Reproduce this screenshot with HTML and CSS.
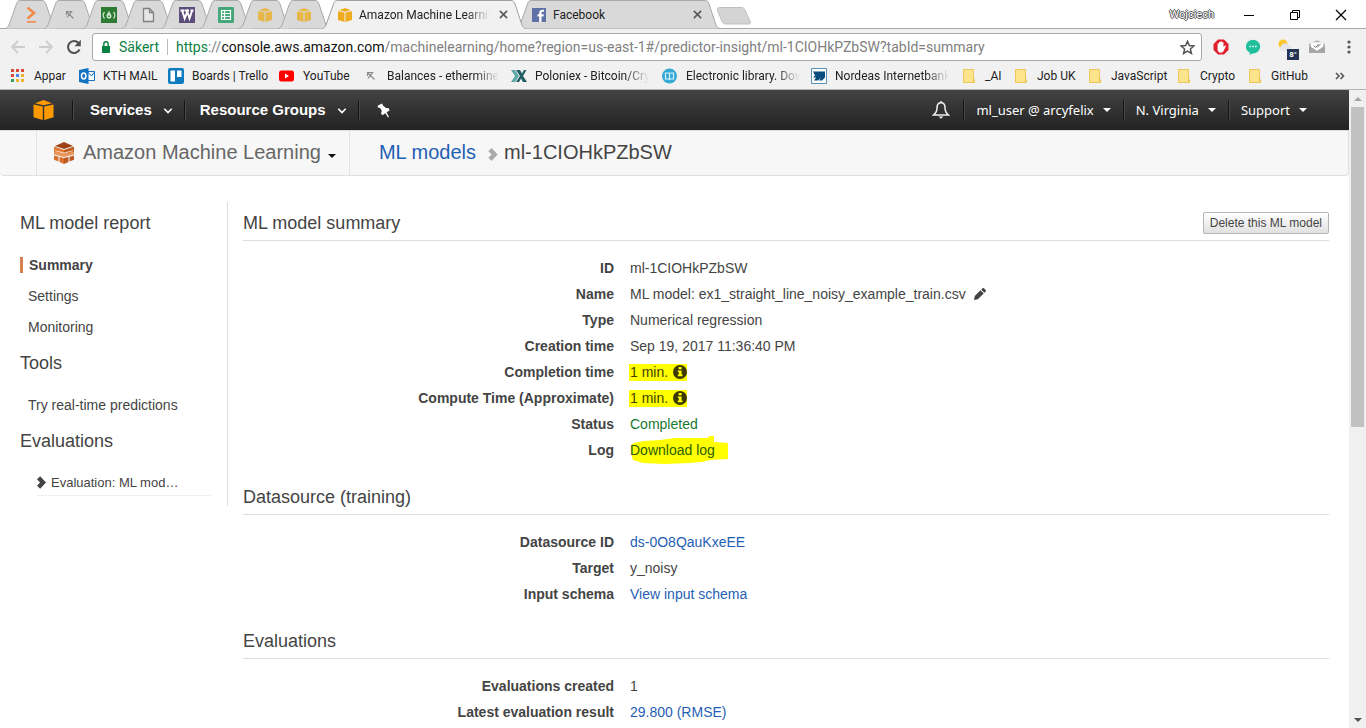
FILE: index.html
```html
<!DOCTYPE html>
<html lang="en">
<head>
<meta charset="utf-8">
<title>Amazon Machine Learning</title>
<link rel="stylesheet" href="styles.css">
</head>
<body>
<svg class="defs" aria-hidden="true">
  <symbol id="cube" viewBox="0 0 20 20"><path d="M0 4.600 9.300 6.500V20L0 17.200zM10.700 6.500 20 4.600V17.200L10.700 20z"/><path d="M1.500 3.200 10 0l8.500 3.200L10 5.200z"/></symbol>
  <symbol id="folder" viewBox="0 0 14 14"><path d="M1.500.5h10v9l1 1v3h-11z" fill="#fce48c" stroke="#ecc65b"/><path d="M11.500 9.500v4" stroke="#ecc65b"/></symbol>
  <symbol id="tab" viewBox="0 0 52 29"><path d="M0 28.500C2 28 3 27 4 25L11.500 4C12.500 1.500 13 .5 15.500.5H37C39 .5 40 1.500 41 4L48 25C49 27.500 50 28 52 28.500" fill="#d9d9d9" stroke="#a9a9a9"/></symbol>
  <symbol id="pick" viewBox="0 0 10 10"><path d="M1.500 5V1.500H7.500M2 2 8.500 8.500M4 4.500 2 7.500M6.500 2 4.500 4" fill="none" stroke="#8c8c8c" stroke-width="1.200"/></symbol>
  <symbol id="close" viewBox="0 0 10 10"><path d="M1 1l8 8M9 1 1 9" fill="none" stroke="#5a5a5a" stroke-width="1.800"/></symbol>
  <symbol id="chevron" viewBox="0 0 9 6"><path d="M.8.8 4.500 4.500 8.200.8" fill="none" stroke="currentColor" stroke-width="1.600"/></symbol>
  <symbol id="caret" viewBox="0 0 8 4"><path d="M0 0h8L4 4z" fill="currentColor"/></symbol>
  <symbol id="info" viewBox="0 0 14 14"><circle cx="7" cy="7" r="7" fill="#3b3800"/><path d="M5.600 2h3v2.300h-3zM4.800 5.400h3.800v4.200h.9v1.700H4.800V9.600h1V7.100h-1z" fill="#ff0"/></symbol>
  <symbol id="right" viewBox="0 0 10 14"><path d="M3.500 0 10 7 3.500 14 0 10.600 3.400 7 0 3.400z" fill="currentColor"/></symbol>
</svg>

<header class="browser">
  <div class="tabstrip">
    <div class="tabs">
      <button class="tab" aria-label="Tab 1"><svg class="shape"><use href="#tab"/></svg><svg class="fav" viewBox="0 0 16 16"><path d="M4.500.5 11 6 4.500 11.500" fill="none" stroke="#f08a4b" stroke-width="2.600"/><path d="M4 14.800h9" stroke="#f08a4b" stroke-width="1.600"/></svg></button>
      <button class="tab" aria-label="Tab 2"><svg class="shape"><use href="#tab"/></svg><svg class="fav small"><use href="#pick"/></svg></button>
      <button class="tab" aria-label="Tab 3"><svg class="shape"><use href="#tab"/></svg><svg class="fav" viewBox="0 0 16 16"><path fill="#2c7a33" d="M0 0h16v16H0z"/><path d="M3.500 5C1.800 7 1.800 9.500 3.500 11.500M12.500 5C14.200 7 14.200 9.500 12.500 11.500" fill="none" stroke="#cfe6cf" stroke-width="1.200"/><path d="M8 3.500C7.500 6 5.500 6.500 5.500 9c0 1.500 1 2.500 2 2.500h1.200c1 0 1.800-1 1.800-2.500C10.500 7 8.500 6 8 3.500z" fill="#cfe6cf"/><path d="M8 7.500 9 10H7z" fill="#2c7a33"/></svg></button>
      <button class="tab" aria-label="Tab 4"><svg class="shape"><use href="#tab"/></svg><svg class="fav" viewBox="0 0 16 16"><path d="M3.500 1.500h6l4 4v9h-10zM9.500 1.500v4h4" fill="#e6e6e6" stroke="#808080" stroke-width="1.300"/></svg></button>
      <button class="tab" aria-label="Tab 5"><svg class="shape"><use href="#tab"/></svg><svg class="fav" viewBox="0 0 16 16"><path fill="#5b4f7a" d="M0 0h16v16H0z"/><path d="M1.500 3.500h4M6 3.500h4M11.500 3.500h3M3.300 4 5.700 11.500 8.300 4.500 10.500 11.500 13 4" fill="none" stroke="#fff" stroke-width="1.900"/></svg></button>
      <button class="tab" aria-label="Tab 6"><svg class="shape"><use href="#tab"/></svg><svg class="fav" viewBox="0 0 16 16"><rect width="16" height="16" rx="1" fill="#45a878"/><path d="M3.500 3.500h9v9h-9zM3.500 6.500h9M3.500 9.500h9M6.500 3.500v9" fill="none" stroke="#fff" stroke-width="1.200"/></svg></button>
      <button class="tab" aria-label="Tab 7"><svg class="shape"><use href="#tab"/></svg><svg class="fav cube dim"><use href="#cube"/></svg></button>
      <button class="tab" aria-label="Tab 8"><svg class="shape"><use href="#tab"/></svg><svg class="fav cube dim"><use href="#cube"/></svg></button>
      <div class="tab wide behind">
        <svg class="shape" viewBox="0 0 204 29"><path d="M0 28.500C2 28 3 27 4 25L11.500 4C12.500 1.500 13 .5 15.500.5H189C191 .5 192 1.500 193 4L200 25C201 27.500 202 28 204 28.500" fill="#d9d9d9" stroke="#a9a9a9"/></svg>
        <svg class="fav" viewBox="0 0 14 14"><path fill="#5f72a8" d="M0 0h14v14H0z"/><path d="M9.500 14V8.500h2l.3-2.200H9.500V5c0-.8.3-1.200 1.200-1.200H12V1.800C9 1.300 7.200 2.300 7.200 4.600v1.700H5.500v2.200h1.700V14z" fill="#fff"/></svg>
        <span class="tab-title">Facebook</span>
        <button class="tab-close" aria-label="Close Facebook"><svg><use href="#close"/></svg></button>
      </div>
      <div class="tab wide active">
        <svg class="shape" viewBox="0 0 204 29"><path d="M0 29C2 28 3 27 4 25L11.500 4C12.500 1.500 13 .5 15.500.5H189C191 .5 192 1.500 193 4L200 25C201 27.500 202 28 204 29" fill="#f1f1f1" stroke="#a0a0a0"/></svg>
        <svg class="fav cube"><use href="#cube"/></svg>
        <span class="tab-title fade">Amazon Machine Learning</span>
        <button class="tab-close" aria-label="Close Amazon Machine Learning"><svg><use href="#close"/></svg></button>
      </div>
      <button class="new-tab" aria-label="New tab"><svg viewBox="0 0 36 18"><path d="M3.500.5H25c2 0 3 .5 4 2.500l5 11c1 2 .5 3-1.500 3H10c-2 0-3-.5-4-2.500L1.500 3.500C1 1.500 1.500.5 3.500.5z" fill="#d4d4d4" stroke="#c0c0c0"/></svg></button>
    </div>
    <div class="window-controls">
      <span class="profile">Wojciech</span>
      <button aria-label="Minimise"><svg viewBox="0 0 12 12"><path d="M1 6.500h10" stroke="#000"/></svg></button>
      <button aria-label="Restore"><svg viewBox="0 0 12 12"><path d="M1.500 3.500h7v7h-7zM3.500 3.500v-2h7v7h-2" fill="none" stroke="#000"/></svg></button>
      <button aria-label="Close"><svg viewBox="0 0 12 12"><path d="M1 1l10 10M11 1 1 11" stroke="#000" stroke-width="1.200"/></svg></button>
    </div>
  </div>

  <div class="toolbar">
    <button class="tool" aria-label="Back"><svg viewBox="0 0 16 16"><path d="M15 8H2.500M8 2 2 8l6 6" fill="none" stroke="#cdcdcd" stroke-width="1.800"/></svg></button>
    <button class="tool" aria-label="Forward"><svg viewBox="0 0 16 16"><path d="M1 8h12.500M8 2l6 6-6 6" fill="none" stroke="#cdcdcd" stroke-width="1.800"/></svg></button>
    <button class="tool" aria-label="Reload"><svg viewBox="0 0 16 16"><path d="M13.500 10.500A6 6 0 1 1 12.500 4" fill="none" stroke="#505050" stroke-width="2.100"/><path d="M14.800.8v6.400H8.400z" fill="#505050"/></svg></button>
    <div class="omnibox">
      <svg class="lock" viewBox="0 0 8 12"><path d="M0 5h8v7H0z" fill="#0b8043"/><path d="M1.800 5.500V3a2.200 2.200 0 0 1 4.400 0v2.500" fill="none" stroke="#0b8043" stroke-width="1.400"/></svg>
      <span class="secure">Säkert</span>
      <span class="url"><span class="scheme">https</span>://<span class="host">console.aws.amazon.com</span>/machinelearning/home?region=us-east-1#/predictor-insight/ml-1CIOHkPZbSW?tabId=summary</span>
      <button class="star" aria-label="Bookmark"><svg viewBox="0 0 14 14"><path d="M7 1.200 8.700 5.200l4.300.4-3.300 2.800 1 4.200L7 10.400l-3.700 2.200 1-4.200L1 5.600l4.300-.4z" fill="none" stroke="#555" stroke-width="1.400"/></svg></button>
    </div>
    <div class="extensions">
      <button aria-label="Ad blocker"><svg viewBox="0 0 16 16"><path d="M5 .5h6L15.500 5v6L11 15.500H5L.5 11V5z" fill="#e0202a"/><path d="M4.600 8V5a.7.700 0 0 1 1.400 0V3.500a.7.700 0 0 1 1.500 0V3a.7.700 0 0 1 1.500 0v.7a.7.700 0 0 1 1.500 0V8l1.200-1.300c.6-.5 1.500 0 1.100.7L10.500 12c-.5 1.200-1.300 1.700-2.700 1.700C5.500 13.700 4.600 12 4.600 10z" fill="#fff"/></svg></button>
      <button aria-label="Chat"><svg viewBox="0 0 16 16"><path d="M8 .8a7.200 6.800 0 0 1 0 13.600L4.500 15.800 4.800 13.600A7.200 6.800 0 0 1 8 .8z" fill="#1fbf9c"/><path d="M4.500 7.500h1.400M7.300 7.500h1.400M10.100 7.500h1.400" stroke="#fff" stroke-width="1.300"/></svg></button>
      <button class="weather" aria-label="Weather"><svg viewBox="0 0 16 16"><circle cx="6" cy="5" r="4.500" fill="#fbc62f"/><path d="M4 12a3 3 0 0 1 .2-5A4 4 0 0 1 11.500 6.500 2.900 2.900 0 0 1 13 12z" fill="#e3e5ea"/></svg><span class="badge">8°</span></button>
      <button aria-label="Mail"><svg viewBox="0 0 16 14"><path d="M0 4 8 0l8 4v9H0z" fill="#bdbdbd"/><path d="M2 2.500h12v5L8 11 2 7.500z" fill="#fff"/><path d="M0 5.500 8 11l8-5.500V13H0z" fill="#a5a5a5"/><path d="M4.500 5.500 6.500 7.500 9.500 4M8 7.500 11.500 4" fill="none" stroke="#777"/></svg></button>
      <button class="dots" aria-label="Menu"><svg viewBox="0 0 16 16"><circle cx="8" cy="3" r="1.600" fill="#555"/><circle cx="8" cy="8" r="1.600" fill="#555"/><circle cx="8" cy="13" r="1.600" fill="#555"/></svg></button>
    </div>
  </div>

  <nav class="bookmarks">
    <a href="#"><svg viewBox="0 0 16 16"><path d="M1 1h3v3H1zM6 1h3v3H6zM11 1h3v3h-3zM1 6h3v3H1z" fill="#d94838"/><path d="M6 6h3v3H6z" fill="#4a86e8"/><path d="M11 6h3v3h-3zM6 11h3v3H6zM11 11h3v3h-3z" fill="#f0b428"/><path d="M1 11h3v3H1z" fill="#35a05a"/></svg><span>Appar</span></a>
    <a href="#"><svg viewBox="0 0 16 16"><path d="M8 3.500h7.500v9H8M8.500 4l4 4 3-4" fill="#fff" stroke="#1272c4"/><path d="M0 2 9.500 0v16L0 14z" fill="#1272c4"/><ellipse cx="4.700" cy="8" rx="2.200" ry="2.900" fill="none" stroke="#fff" stroke-width="1.500"/></svg><span>KTH MAIL</span></a>
    <a href="#"><svg viewBox="0 0 16 16"><rect width="16" height="16" rx="2" fill="#0e7bbf"/><path d="M2.500 2.500H7v11H2.500zM9 2.500h4.500V9H9z" fill="#fff"/></svg><span>Boards | Trello</span></a>
    <a href="#"><svg viewBox="0 0 16 16"><rect y="2.500" width="15" height="11" rx="2.500" fill="#f00"/><path d="M6 5.500 10 8l-4 2.500z" fill="#fff"/></svg><span>YouTube</span></a>
    <a href="#"><svg class="small"><use href="#pick"/></svg><span class="fade">Balances - ethermine</span></a>
    <a href="#"><svg viewBox="0 0 16 16"><path d="M0 2h4l4 6-4 6H0l4-6z" fill="#5fa9a4"/><path d="M5 2h4l2 3.500L13 2h2.500L12 8l4 6h-4l-2-3.500L8 14H5l4-6z" fill="#1f5d63"/></svg><span class="fade">Poloniex - Bitcoin/Cry</span></a>
    <a href="#"><svg viewBox="0 0 16 16"><circle cx="7.500" cy="8" r="7.500" fill="#36a9d6"/><path d="M3.500 5h3.200l.8.700.8-.7h3.200v6H8.300l-.8.600-.8-.6H3.500zM7.500 5.500v6" fill="none" stroke="#d8f2fb" stroke-width="1.200"/></svg><span class="fade">Electronic library. Dow</span></a>
    <a href="#"><svg viewBox="0 0 16 16"><path d="M.5.500h15v15H.5z" fill="#fff" stroke="#5c90b4"/><path d="M2 3.500h12v6l-3 3H8l2-3-3 3H3l2-3H2l2-2z" fill="#0a4c7c"/></svg><span class="fade">Nordeas Internetbank</span></a>
    <a href="#"><svg class="folder"><use href="#folder"/></svg><span>_AI</span></a>
    <a href="#"><svg class="folder"><use href="#folder"/></svg><span>Job UK</span></a>
    <a href="#"><svg class="folder"><use href="#folder"/></svg><span>JavaScript</span></a>
    <a href="#"><svg class="folder"><use href="#folder"/></svg><span>Crypto</span></a>
    <a href="#"><svg class="folder"><use href="#folder"/></svg><span>GitHub</span></a>
    <button class="overflow" aria-label="More bookmarks"><svg viewBox="0 0 10 8"><path d="M1 1l3 3-3 3M5.500 1l3 3-3 3" fill="none" stroke="#555" stroke-width="1.600"/></svg></button>
  </nav>
</header>

<div class="viewport">
  <div class="page">
    <nav class="aws-nav">
      <a class="aws-home" href="#" aria-label="Console home"><svg><use href="#cube"/></svg></a>
      <button class="nav-main services">Services <svg><use href="#chevron"/></svg></button>
      <button class="nav-main groups">Resource Groups <svg><use href="#chevron"/></svg></button>
      <button class="nav-pin" aria-label="Pin shortcuts"><svg viewBox="0 0 13 15"><path d="M5 .5 6.200 2.800 9 5 11.800 5.200 12.500 7.500 9.600 9.200 12 14 11 14.500 8.300 10.200 5.500 12.200 4 10.500 4.800 7.800 3 5 .5 4.200 1 2.600z" fill="#fff"/></svg></button>
      <span class="spacer"></span>
      <button class="nav-bell" aria-label="Notifications"><svg viewBox="0 0 18 18"><path d="M9 1.800C5.800 1.800 5 4.500 5 7c0 3.500-1 5-3.500 7h15C14 12 13 10.500 13 7c0-2.500-.8-5.200-4-5.200z" fill="none" stroke="#f0f0f0" stroke-width="1.500"/><path d="M6.500 15.500h5L9 17.800zM8 .3h2v1.500H8z" fill="#f0f0f0"/></svg></button>
      <button class="nav-side">ml_user @ arcyfelix <svg><use href="#caret"/></svg></button>
      <button class="nav-side">N. Virginia <svg><use href="#caret"/></svg></button>
      <button class="nav-side last">Support <svg><use href="#caret"/></svg></button>
    </nav>

    <div class="service-bar">
      <button class="service">
        <svg class="service-icon" viewBox="0 0 20 22"><path d="M0 4.500 10 8v5L0 11z" fill="#e07a33"/><path d="M20 4.500 10 8v5l10-2z" fill="#c05c20"/><path d="M1 4 10 0l9 4-9 3z" fill="#9c4418"/><path d="M0 9.500 10 11.500 20 9.500v3L10 15 0 12.500z" fill="#e8965c"/><path d="M0 13.500 4.500 14.800v4.700L0 17.800zM5.500 15 10 16v6l-4.500-2z" fill="#d9702c"/><path d="M20 13.500 15.500 14.800v4.700l4.500-1.700zM14.500 15 10 16v6l4.500-2z" fill="#bd5a22"/><path d="M1 8.200 10 10.600 19 8.200V9l-9 2.400L1 9z" fill="#fbe3cf"/></svg>
        <span>Amazon Machine Learning</span>
        <svg class="caret"><use href="#caret"/></svg>
      </button>
      <div class="crumbs">
        <a href="#">ML models</a>
        <svg><use href="#right"/></svg>
        <span>ml-1CIOHkPZbSW</span>
      </div>
    </div>

    <div class="content">
      <aside class="sidebar">
        <h2>ML model report</h2>
        <ul>
          <li class="current"><a href="#">Summary</a></li>
          <li><a href="#">Settings</a></li>
          <li><a href="#">Monitoring</a></li>
        </ul>
        <h2>Tools</h2>
        <ul>
          <li><a href="#">Try real-time predictions</a></li>
        </ul>
        <h2>Evaluations</h2>
        <ul>
          <li class="nested"><a href="#"><svg><use href="#right"/></svg>Evaluation: ML mod…</a></li>
        </ul>
      </aside>

      <main>
        <section>
          <div class="heading"><h2>ML model summary</h2><button class="delete">Delete this ML model</button></div>
          <dl>
            <dt>ID</dt><dd>ml-1CIOHkPZbSW</dd>
            <dt>Name</dt><dd>ML model: ex1_straight_line_noisy_example_train.csv <button class="edit" aria-label="Edit name"><svg viewBox="0 0 13 13"><path d="M0 13 .8 8.800 7 2.500 10.500 6 4.200 12.200zM7.800 1.800 9.200.4c.5-.5 1.100-.5 1.600 0l1.800 1.800c.5.500.5 1.100 0 1.600L11.200 5.200z" fill="#444"/></svg></button></dd>
            <dt>Type</dt><dd>Numerical regression</dd>
            <dt>Creation time</dt><dd>Sep 19, 2017 11:36:40 PM</dd>
            <dt>Completion time</dt><dd><span class="marked">1 min. <svg><use href="#info"/></svg></span></dd>
            <dt>Compute Time (Approximate)</dt><dd><span class="marked">1 min. <svg><use href="#info"/></svg></span></dd>
            <dt>Status</dt><dd class="ok">Completed</dd>
            <dt>Log</dt><dd><a class="log" href="#"><svg viewBox="0 0 98 29"><path d="M2 8C5 6 10 6 15 5L30 4 45 2H78L79 0h5v6l14 1v16l-18 1-8 2-13 1-24 1-22-1-10-3L2 21z" fill="#ff0"/></svg><span>Download log</span></a></dd>
          </dl>
        </section>
        <section>
          <div class="heading"><h2>Datasource (training)</h2></div>
          <dl>
            <dt>Datasource ID</dt><dd><a href="#">ds-0O8QauKxeEE</a></dd>
            <dt>Target</dt><dd>y_noisy</dd>
            <dt>Input schema</dt><dd><a href="#">View input schema</a></dd>
          </dl>
        </section>
        <section>
          <div class="heading"><h2>Evaluations</h2></div>
          <dl>
            <dt>Evaluations created</dt><dd>1</dd>
            <dt>Latest evaluation result</dt><dd><a href="#">29.800 (RMSE)</a></dd>
          </dl>
        </section>
      </main>
    </div>
  </div>

  <div class="scrollbar" aria-hidden="true">
    <svg class="up" viewBox="0 0 8 4"><path d="M4 0l4 4H0z" fill="#a3a3a3"/></svg>
    <div class="track"><div class="thumb"></div></div>
    <svg class="down"><use href="#caret"/></svg>
  </div>
</div>
</body>
</html>
```

FILE: styles.css
```css
* { box-sizing: border-box; }

body {
  margin: 0;
  height: 100vh;
  display: flex;
  flex-direction: column;
  overflow: hidden;
  background: #fff;
  color: #444;
  font-family: "Liberation Sans", Arial, sans-serif;
  font-size: 14px;
}

.defs { position: absolute; width: 0; height: 0; }
button { margin: 0; padding: 0; border: 0; background: none; color: inherit; font: inherit; }
a { color: #1f60b5; text-decoration: none; }
svg { display: block; flex: none; }

/* Browser frame */
.browser {
  flex: none;
  color: #222;
  font-family: Roboto, "Open Sans", sans-serif;
  font-size: 12px;
  background: #f1f1f1;
  border-bottom: 1px solid #b3b3b3;
}
.tabstrip {
  display: flex;
  justify-content: space-between;
  height: 29px;
  background: #fff;
  box-shadow: inset 0 -1px #a9a9a9;
}
.tabs { display: flex; padding-left: 5px; }
.tab {
  position: relative;
  display: flex;
  align-items: center;
  justify-content: center;
  width: 52px;
  height: 29px;
  margin-right: -13px;
}
.shape { position: absolute; inset: 0; width: 100%; height: 100%; }
.fav { position: relative; width: 16px; height: 16px; }
.fav.small { width: 10px; height: 10px; }
.cube { width: 14px; height: 14px; fill: #eeac1e; }
.cube.dim { opacity: .75; }
.tab.wide {
  width: 204px;
  padding: 0 16px;
  gap: 7px;
  justify-content: flex-start;
}
.tab.active { order: 1; z-index: 1; margin-left: 5px; margin-right: -10px; }
.tab.behind { order: 2; margin-right: -4px; }
.tab.behind .fav { width: 14px; height: 14px; }
.tab-title { position: relative; flex: 1; overflow: hidden; white-space: nowrap; }
.tab-close { position: relative; padding: 2px; }
.tab-close svg { width: 9px; height: 9px; }
.fade { mask-image: linear-gradient(to right, #000 calc(100% - 24px), transparent); }
.new-tab { order: 3; align-self: center; margin-top: 3px; }
.new-tab svg { width: 36px; height: 18px; }
.window-controls { display: flex; align-items: center; gap: 34px; padding-right: 19px; }
.window-controls svg { width: 12px; height: 12px; }
.profile {
  margin-right: -5px;
  font-size: 11px;
  color: #fff;
  text-shadow: 1px 0 #555, -1px 0 #555, 0 1px #555, 0 -1px #555;
}

.toolbar { display: flex; align-items: center; height: 35px; padding: 3px 9px 2px 10px; }
.tool { width: 28px; height: 20px; }
.tool svg { width: 16px; height: 16px; }
.omnibox {
  flex: 1;
  display: flex;
  align-items: center;
  height: 28px;
  margin: 0 11px 0 -2px;
  padding: 0 6px 0 9px;
  background: #fff;
  border: 1px solid #a9a9a9;
  border-radius: 3px;
  font-size: 14px;
}
.lock { width: 8px; height: 12px; }
.secure {
  margin-left: 9px;
  padding-right: 8px;
  border-right: 1px solid #bbb;
  line-height: 16px;
  color: #0b8043;
}
.url { flex: 1; margin-left: 8px; color: #808080; white-space: nowrap; }
.scheme { color: #0b8043; }
.host { color: #111; }
.star svg { width: 15px; height: 15px; }
.extensions { display: flex; gap: 16px; }
.extensions svg { width: 16px; height: 16px; }
.weather { position: relative; }
.badge {
  position: absolute;
  left: 10px;
  top: 10px;
  width: 12px;
  height: 11px;
  background: #243353;
  color: #fff;
  font-size: 8px;
  font-weight: 700;
  line-height: 11px;
  text-align: center;
}

.bookmarks {
  display: grid;
  grid-template-columns: 69px 89px 111px 84px 148px 151px 149px 151px 52px 74px 89px 71px 1fr 20px;
  align-items: center;
  height: 25px;
  padding: 0 17px 2px 10px;
}
.bookmarks a { display: flex; align-items: center; gap: 8px; color: #222; white-space: nowrap; }
.bookmarks svg { width: 16px; height: 16px; }
.bookmarks svg.small { width: 10px; height: 10px; margin: 0 3px; }
.bookmarks svg.folder { width: 14px; height: 14px; margin: 0 1px 0 0; }
.bookmarks .fade { max-width: 114px; overflow: hidden; }
.bookmarks .overflow svg { width: 10px; height: 8px; margin-left: 6px; }

/* Page */
.viewport { flex: 1; min-height: 0; display: flex; }
.page { flex: 1; min-width: 0; overflow: hidden; }

.aws-nav {
  display: flex;
  align-items: center;
  height: 40px;
  padding: 0 30px 0 33px;
  background: linear-gradient(#434343, #222);
  color: #fff;
}
.aws-nav button { display: flex; align-items: center; height: 20px; white-space: nowrap; }
.aws-home { margin-right: 18px; }
.aws-home svg { width: 21px; height: 20px; fill: #f90; }
.aws-nav .nav-main {
  gap: 11px;
  padding: 0 11px 2px 17px;
  border-left: 1px solid #151515;
  box-shadow: inset 1px 0 #484848;
  font-size: 15px;
  font-weight: 700;
}
.aws-nav .groups { padding-left: 15px; }
.nav-main svg { width: 10px; height: 6px; margin-top: 4px; }
.nav-pin { padding: 0 18px; border-left: 1px solid #151515; box-shadow: inset 1px 0 #484848; }
.nav-pin svg { width: 13px; height: 15px; }
.spacer { flex: 1; }
.nav-bell { padding-right: 13px; }
.nav-bell svg { width: 18px; height: 18px; }
.nav-side {
  gap: 9px;
  padding: 0 12px;
  border-left: 1px solid #151515;
  box-shadow: inset 1px 0 #484848;
  font-family: "Noto Sans", "Open Sans", sans-serif;
  font-size: 13px;
}
.nav-side svg { width: 8px; height: 4px; }

.service-bar {
  display: flex;
  height: 46px;
  padding-left: 36px;
  background: #f7f7f7;
  border: 1px solid #e0e0e0;
  border-width: 1px 1px 1px 0;
  border-radius: 0 0 4px 4px;
  font-size: 20px;
}
.service {
  display: flex;
  align-items: center;
  gap: 9px;
  padding: 0 13px 2px 17px;
  border: 1px solid #e2e2e2;
  border-width: 0 1px;
  color: #666;
}
.service-icon { width: 20px; height: 22px; margin-top: 2px; }
.service .caret { width: 8px; height: 4px; margin-top: 7px; margin-left: -2px; color: #111; }
.crumbs { display: flex; align-items: center; padding: 0 0 2px 29px; }
.crumbs svg { width: 10px; height: 13px; margin: 4px 6px 0 12px; color: #aaa; }

.content { display: flex; align-items: flex-start; padding: 26px 20px 0; }
.sidebar { flex: none; width: 208px; padding: 9px 0 8px; border-right: 1px solid #ddd; }
h2 { margin: 0; font-size: 18px; font-weight: 400; line-height: 24px; }
.sidebar h2 + ul { margin: 14px 0 9px; padding: 0; list-style: none; }
.sidebar ul:last-child { margin-bottom: 0; }
.sidebar li { display: flex; align-items: center; height: 31px; padding-left: 8px; }
.sidebar a { color: #444; }
.sidebar .current { padding-left: 0; }
.current a { padding-left: 6px; border-left: 3px solid #d4804f; font-weight: 700; }
.sidebar .nested { margin: 0 16px; padding-left: 1px; }
.nested a {
  display: flex;
  align-items: center;
  gap: 5px;
  width: 100%;
  height: 27px;
  border-bottom: 1px solid #f0f0f0;
  font-size: 13px;
}
.nested svg { width: 9px; height: 13px; }

main { flex: 1; min-width: 0; padding: 9px 0 0 15px; }
section { margin-bottom: 22px; }
.heading {
  display: flex;
  align-items: center;
  justify-content: space-between;
  padding-bottom: 5px;
  border-bottom: 1px solid #ddd;
}
.delete {
  height: 22px;
  padding: 0 6px;
  border: 1px solid #b5b5b5;
  border-radius: 2px;
  background: linear-gradient(#fff, #e0e0e0);
  font-size: 12px;
}
dl {
  display: grid;
  grid-template-columns: 371fr 699fr;
  column-gap: 16px;
  margin: 14px 0 0;
  line-height: 26px;
}
dt { font-weight: 700; text-align: right; }
dd { display: flex; align-items: center; height: 26px; margin: 0; white-space: nowrap; }
.edit { margin-left: 8px; }
.edit svg { width: 12px; height: 12px; }
.marked {
  display: flex;
  align-items: center;
  gap: 5px;
  height: 17px;
  margin-left: -1px;
  padding-left: 1px;
  background: #ff0;
  color: #444100;
}
.marked svg { width: 14px; height: 14px; }
.ok { color: #187a2f; }
.log { position: relative; color: #2b6000; }
.log svg { position: absolute; left: 0; top: -1px; width: 98px; height: 29px; }
.log span { position: relative; }

.scrollbar {
  flex: none;
  display: flex;
  flex-direction: column;
  align-items: center;
  width: 17px;
  background: #f0f0f0;
}
.scrollbar svg { width: 8px; height: 4px; margin: 7px 0 6px; color: #505050; }
.track { flex: 1; width: 13px; }
.thumb { height: 53%; background: #c1c1c1; }
```
